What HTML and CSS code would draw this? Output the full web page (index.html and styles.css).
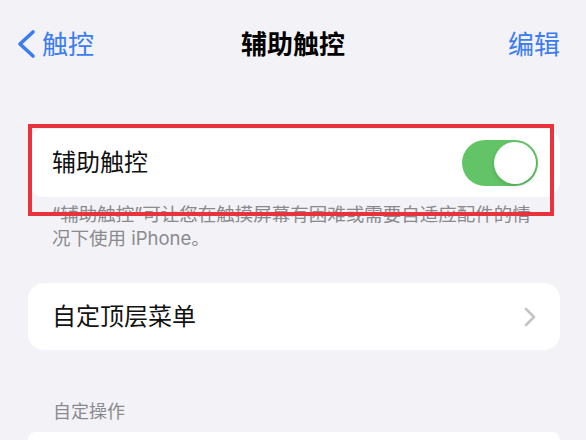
FILE: index.html
```html
<!DOCTYPE html>
<html lang="zh-CN">
<head>
<meta charset="utf-8">
<link rel="stylesheet" href="styles.css">
</head>
<body>
<div class="screen">
  <header class="nav">
    <div class="nav-back">
      <svg class="back-icon" width="20" height="30" viewBox="0 0 20 30">
        <polyline points="16,3 3,15 16,27" fill="none" stroke="#3b7cf0" stroke-width="3.6" stroke-linecap="round" stroke-linejoin="round"/>
      </svg>
      <span class="nav-link">触控</span>
    </div>
    <div class="nav-title">辅助触控</div>
    <div class="nav-link nav-edit">编辑</div>
  </header>

  <section class="group group-first">
    <div class="card">
      <div class="row">
        <span class="row-label">辅助触控</span>
        <div class="toggle"><div class="knob"></div></div>
      </div>
      <div class="highlight"></div>
    </div>
    <p class="footer">“辅助触控”可让您在触摸屏幕有困难或需要自适应配件的情<br>况下使用 iPhone。</p>
  </section>

  <section class="group group-second">
    <div class="card">
      <div class="row">
        <span class="row-label">自定顶层菜单</span>
        <svg class="chevron" width="12" height="20" viewBox="0 0 12 20">
          <polyline points="2,2 10,10 2,18" fill="none" stroke="#c4c4c7" stroke-width="2.6" stroke-linecap="round" stroke-linejoin="round"/>
        </svg>
      </div>
    </div>
  </section>

  <section class="group group-third">
    <div class="header">自定操作</div>
    <div class="card card-tall"></div>
  </section>
</div>
</body>
</html>
```

FILE: styles.css
```css
html, body {
  margin: 0;
  padding: 0;
}
body {
  background: #f2f2f7;
  font-family: "Inter", "Noto Sans CJK SC", sans-serif;
  width: 586px;
  height: 440px;
  overflow: hidden;
}
.screen {
  padding: 0 26px 0 28px;
}
.nav {
  height: 90px;
  display: flex;
  align-items: center;
  justify-content: space-between;
  margin: 0 -26px 0 -28px;
  padding: 0 26px 0 17px;
  position: relative;
}
.nav-back {
  display: flex;
  align-items: center;
  gap: 5px;
}
.back-icon {
  display: block;
  margin-top: -2px;
}
.nav-link {
  color: #3b7cf0;
  font-size: 26px;
  line-height: 32px;
}
.nav-title {
  position: absolute;
  left: 0;
  right: 0;
  text-align: center;
  font-size: 26px;
  line-height: 32px;
  font-weight: 700;
  color: #000;
  pointer-events: none;
}
.group-first {
  margin-top: 39px;
}
.card {
  background: #fff;
  border-radius: 16px;
  position: relative;
}
.row {
  height: 68px;
  display: flex;
  align-items: center;
  justify-content: space-between;
  padding: 0 22px 0 24px;
}
.row-label {
  font-size: 24px;
  color: #111;
  line-height: 30px;
}
.toggle {
  width: 76px;
  height: 46px;
  border-radius: 23px;
  background: #62c466;
  position: relative;
}
.knob {
  position: absolute;
  right: 2px;
  top: 2px;
  width: 42px;
  height: 42px;
  border-radius: 50%;
  background: #fff;
  box-shadow: 0 2px 4px rgba(0, 0, 0, 0.15);
}
.highlight {
  position: absolute;
  left: 0;
  top: -5px;
  right: 6px;
  bottom: -19px;
  border: 4px solid #e8333d;
  z-index: 2;
}
.footer {
  margin: 0;
  padding: 5px 4px 0 24px;
  font-size: 18.5px;
  line-height: 24px;
  color: #8a8a8e;
  position: relative;
  z-index: 1;
  white-space: nowrap;
}
.group-second {
  margin-top: 33px;
}
.group-second .row {
  height: 67px;
  padding-right: 24px;
}
.chevron {
  display: block;
}
.group-third {
  margin-top: 50px;
}
.header {
  padding-left: 25px;
  font-size: 18px;
  line-height: 24px;
  color: #8a8a8e;
  margin-bottom: 8px;
}
.card-tall {
  height: 8px;
  border-radius: 16px 16px 0 0;
}
```
